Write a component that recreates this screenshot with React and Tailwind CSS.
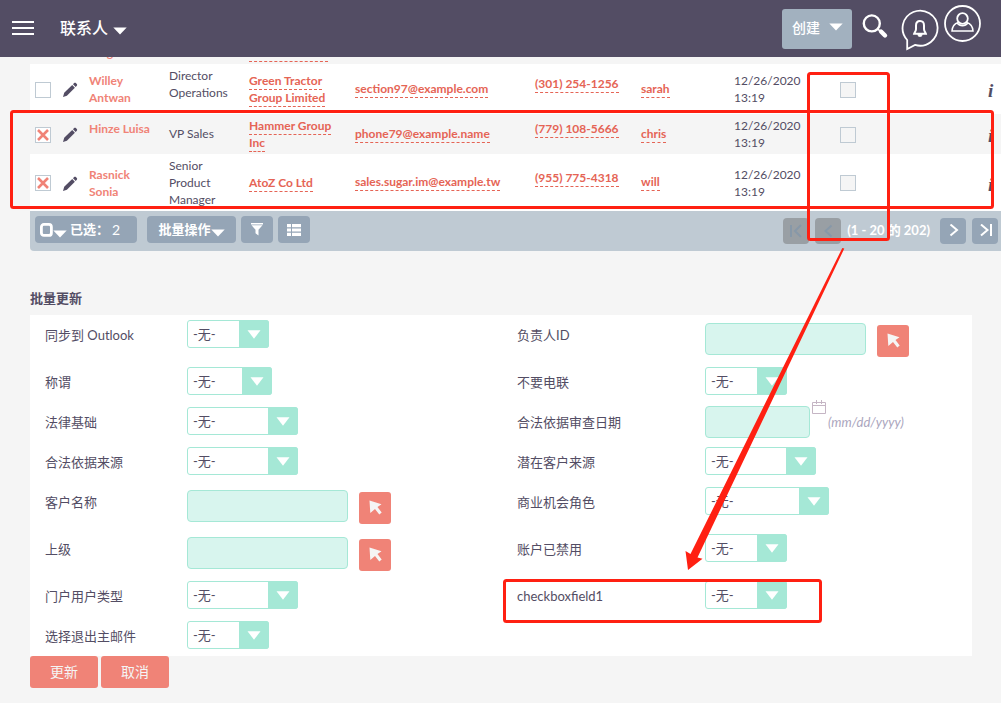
import React from "react";

const FONT = "font-['Lato','Noto_Sans_CJK_SC',sans-serif]";

const contacts = [
  {
    id: "c1",
    name: "Willey Antwan",
    title: "Director Operations",
    titlePad: "pb-[10px]",
    account: "Green Tractor Group Limited",
    email: "section97@example.com",
    phone: "(301) 254-1256",
    user: "sarah",
    date: "12/26/2020",
    time: "13:19",
    checked: false,
    row: "h-[50px] bg-white",
  },
  {
    id: "c2",
    name: "Hinze Luisa",
    namePad: "pb-[11px]",
    title: "VP Sales",
    titlePad: "pb-[2px]",
    account: "Hammer Group Inc",
    email: "phone79@example.name",
    phone: "(779) 108-5666",
    user: "chris",
    date: "12/26/2020",
    time: "13:19",
    checked: true,
    row: "h-[40px] bg-[#f5f5f5]",
  },
  {
    id: "c3",
    name: "Rasnick Sonia",
    title: "Senior Product Manager",
    account: "AtoZ Co Ltd",
    email: "sales.sugar.im@example.tw",
    phone: "(955) 775-4318",
    user: "will",
    date: "12/26/2020",
    time: "13:19",
    checked: true,
    row: "h-[57px] bg-white",
  },
];

const fields = [
  { h: "h-[47px]", left: ["同步到 Outlook", "select", "w-[82px]"], right: ["负责人ID", "relate"] },
  { h: "h-[40px]", left: ["称谓", "select", "w-[85px]"], right: ["不要电联", "select", "w-[82px]"] },
  { h: "h-[40px]", left: ["法律基础", "select", "w-[111px]"], right: ["合法依据审查日期", "date"] },
  { h: "h-[40px]", left: ["合法依据来源", "select", "w-[111px]"], right: ["潜在客户来源", "select", "w-[111px]"] },
  { h: "h-[47px]", left: ["客户名称", "relate"], right: ["商业机会角色", "select", "w-[124px]"] },
  { h: "h-[47px]", left: ["上级", "relate"], right: ["账户已禁用", "select", "w-[82px]"] },
  { h: "h-[40px]", left: ["门户用户类型", "select", "w-[111px]"], right: ["checkboxfield1", "select", "w-[82px]"] },
  { h: "h-[40px]", left: ["选择退出主邮件", "select", "w-[82px]"], right: null },
];

function Caret({ className = "" }) {
  return (
    <svg className={className} width="14" height="8" viewBox="0 0 14 8" fill="currentColor" aria-hidden="true">
      <path d="M0.3 0.5h13.4L7 7.5z" />
    </svg>
  );
}

function Pencil() {
  return (
    <svg width="16" height="16" viewBox="0 0 16 16" fill="#534d64" aria-hidden="true" className="block">
      <path d="M1 15l1.2-4.2L10.2 3l2.700 2.700-8 8z" />
      <path d="M11 2.200l1.100-1.100c.6-.5 1.300-.5 1.800 0l.9.9c.5.5.5 1.200 0 1.700L13.700 4.900z" />
    </svg>
  );
}

function NameLink({ children }) {
  return (
    <a href="#contact" className="font-bold text-[#f08377]">
      {children}
    </a>
  );
}

function DashLink({ children }) {
  return (
    <a href="#record" className="border-b border-dashed border-[#e56455] pb-px font-bold text-[#e56455]">
      {children}
    </a>
  );
}

function Tick({ label, checked, bg }) {
  return (
    <span className="relative block size-4">
      <input
        type="checkbox"
        aria-label={label}
        defaultChecked={checked}
        className={`peer block size-4 appearance-none border border-[#bfcad3] ${bg}`}
      />
      <svg
        className="pointer-events-none absolute inset-0 hidden peer-checked:block"
        width="16"
        height="16"
        viewBox="0 0 16 16"
        stroke="#f08377"
        strokeWidth="2.600"
        aria-hidden="true"
      >
        <path d="M3 3l10 10M13 3L3 13" />
      </svg>
    </span>
  );
}

function ContactTable() {
  return (
    <table className="w-full table-fixed border-collapse text-[12px] leading-[17px] text-[#534d64]">
      <colgroup>
        <col className="w-[27px]" />
        <col className="w-[27px]" />
        <col className="w-[80px]" />
        <col className="w-[80px]" />
        <col className="w-[106px]" />
        <col className="w-[180px]" />
        <col className="w-[106px]" />
        <col className="w-[93px]" />
        <col className="w-[106px]" />
        <col />
        <col className="w-[18px]" />
      </colgroup>
      <tbody>
        <tr className="h-[20px]">
          <td colSpan={2} />
          <td className="px-[5px] pb-[3px]">
            <NameLink>Jang</NameLink>
          </td>
          <td />
          <td className="px-[5px] pb-[3px]">
            <DashLink>Investment Inc</DashLink>
          </td>
          <td colSpan={6} />
        </tr>
        {contacts.map((c) => (
          <tr key={c.id} className={c.row}>
            <td className="px-[5px] pt-px">
              <Tick label={c.name} checked={c.checked} bg="bg-white" />
            </td>
            <td className="px-[5px] pt-[2px]">
              <a href="#edit" aria-label={"Edit " + c.name}>
                <Pencil />
              </a>
            </td>
            <td className={`px-[5px] ${c.namePad || ""}`}>
              <NameLink>{c.name}</NameLink>
            </td>
            <td className={`px-[5px] ${c.titlePad || ""}`}>{c.title}</td>
            <td className="px-[5px]">
              <DashLink>{c.account}</DashLink>
            </td>
            <td className="px-[5px] pb-[2px]">
              <DashLink>{c.email}</DashLink>
            </td>
            <td className="px-[5px] pb-[11px]">
              <DashLink>{c.phone}</DashLink>
            </td>
            <td className="px-[5px] pb-[2px]">
              <DashLink>{c.user}</DashLink>
            </td>
            <td className="px-[5px]">
              {c.date}
              <br />
              {c.time}
            </td>
            <td className="px-[5px] pt-px">
              <Tick label={"checkboxfield1 " + c.name} bg="bg-[#f5f5f5]" />
            </td>
            <td className="pt-[5px] pl-[5px]">
              <span className="font-['Liberation_Serif',serif] text-[19px] font-bold italic">i</span>
            </td>
          </tr>
        ))}
      </tbody>
    </table>
  );
}

const toolBtn = "flex h-[27px] items-center justify-center rounded-[4px] bg-[#95a5b6] text-white";

function PageButton({ label, disabled, d }) {
  return (
    <button
      type="button"
      aria-label={label}
      disabled={disabled}
      className="flex size-[26px] items-center justify-center rounded-[4px] bg-[#95a5b6] text-white disabled:bg-[#999fa4] disabled:text-[#8798a8]"
    >
      <svg width="14" height="14" viewBox="0 0 14 14" fill="none" stroke="currentColor" strokeWidth="2" aria-hidden="true">
        <path d={d} />
      </svg>
    </button>
  );
}

function Toolbar() {
  return (
    <div className="flex h-[40px] items-start justify-between rounded-bl-[4px] bg-[#bfcad3] pt-[5px] pr-[3px] pl-[5px]">
      <div className="flex">
        <button type="button" className={`${toolBtn} mr-[10px] w-[102px] justify-start pl-[5px] text-[14px]`}>
          <svg width="13" height="14" viewBox="0 0 13 14" fill="none" stroke="currentColor" strokeWidth="2.800" aria-hidden="true">
            <rect x="1.400" y="1.400" width="10" height="11" rx="2.500" />
          </svg>
          <Caret className="mt-[8px] mr-[3px]" />
          <b className="mr-[3px] text-[13px]">已选：</b>
          <span>2</span>
        </button>
        <button type="button" className={`${toolBtn} mr-[5px] w-[89px] text-[13px] font-bold`}>
          批量操作
          <Caret className="mt-[6px]" />
        </button>
        <button type="button" aria-label="筛选" className={`${toolBtn} mr-[5px] w-[32px]`}>
          <svg width="14" height="14" viewBox="0 0 14 14" fill="currentColor" aria-hidden="true">
            <path d="M1 0h12v1.500H1zM1.500 2.200h11L8.500 6.800v5.700l-3-2.200V6.800z" />
          </svg>
        </button>
        <button type="button" aria-label="选择列" className={`${toolBtn} w-[32px]`}>
          <svg width="14" height="12" viewBox="0 0 14 12" fill="currentColor" aria-hidden="true">
            <path d="M0 0h4v3.200H0zM5 0h9v3.200H5zM0 4.400h4v3.200H0zM5 4.400h9v3.200H5zM0 8.800h4V12H0zM5 8.800h9V12H5z" />
          </svg>
        </button>
      </div>
      <div className="flex items-center gap-[6px] pt-[2px]">
        <PageButton label="首页" disabled d="M2 1v12M12 1L6 7l6 6" />
        <PageButton label="上一页" disabled d="M10.500 1.500L4.500 7l6 5.500" />
        <span className="mr-[4px] text-[13px] font-bold whitespace-nowrap text-white">(1 - 20 的 202)</span>
        <PageButton label="下一页" d="M4.500 0.500L11 6L4.500 11.500" />
        <PageButton label="末页" d="M3 0.500L9.500 6l-6.500 5.500M13 0v12" />
      </div>
    </div>
  );
}

function FieldSelect({ id, width }) {
  return (
    <div className={`relative mt-[5px] h-[28px] ${width}`}>
      <select
        id={id}
        className="h-full w-full appearance-none rounded-[3px] border border-[#a5e8d6] bg-white pt-[2px] pl-[5px] text-[13px] text-[#534d64]"
      >
        <option>-无-</option>
      </select>
      <span className="pointer-events-none absolute inset-y-0 right-0 flex w-[30px] items-center justify-center rounded-r-[3px] bg-[#a5e8d6] text-white">
        <svg width="14" height="9" viewBox="0 0 14 9" fill="currentColor" aria-hidden="true">
          <path d="M0.500 0.300h13L7 8.700z" />
        </svg>
      </span>
    </div>
  );
}

const inputCls = "h-[32px] rounded-[4px] border border-[#a5e8d6] bg-[#d8f5ee] px-2 text-[13px] text-[#534d64]";

function Control({ id, kind, width }) {
  if (kind === "select") return <FieldSelect id={id} width={width} />;
  if (kind === "relate")
    return (
      <div className="flex items-start gap-[11px] pt-[8px]">
        <input id={id} type="text" className={`${inputCls} w-[161px]`} />
        <button
          type="button"
          aria-label="选择"
          className="mt-[2px] flex size-[32px] items-center justify-center rounded-[3px] bg-[#f08377]"
        >
          <svg width="14" height="16" viewBox="0 0 14 16" fill="#f5f5f5" aria-hidden="true">
            <path d="M1.500 0.500L13.500 4.300L9.500 7L13.700 12.600L11.300 14.400L7 9L2.300 13z" />
          </svg>
        </button>
      </div>
    );
  return (
    <div className="flex items-start pt-[4px]">
      <input id={id} type="text" className={`${inputCls} w-[105px]`} />
      <button type="button" aria-label="日历" className="-mt-[6px] ml-[2px]">
        <svg width="14" height="14" viewBox="0 0 14 14" fill="none" stroke="#c5b5c4" aria-hidden="true">
          <path d="M0.500 2.500h13v11h-13zM0.500 5.500h13M4.500 0v4M9.500 0v4" />
        </svg>
      </button>
      <span className="ml-[2px] pt-[6px] text-[13px] leading-[20px] whitespace-nowrap text-[#aaa5bd] italic">
        (mm/dd/yyyy)
      </span>
    </div>
  );
}

function Field({ id, field }) {
  if (!field) return null;
  const [label, kind, width] = field;
  return (
    <>
      <label htmlFor={id} className="pt-[10px] pl-[15px] text-[13px] leading-[20px] whitespace-nowrap">
        {label}
      </label>
      <div>
        <Control id={id} kind={kind} width={width} />
      </div>
    </>
  );
}

function MassUpdate() {
  const action = "h-[32px] w-[68px] rounded-[3px] bg-[#f08377] pb-[2px] text-[14px] text-[#f5f5f5]";
  return (
    <form className="mt-[37px] mr-[29px] text-[#534d64]" onSubmit={(e) => e.preventDefault()}>
      <h2 className="h-[27px] text-[13px] leading-[20px] font-bold">批量更新</h2>
      <div className="bg-white">
        {fields.map((f, i) => (
          <div key={i} className={`grid grid-cols-[157fr_315fr_203fr_267fr] ${f.h}`}>
            <Field id={"l" + i} field={f.left} />
            <Field id={"r" + i} field={f.right} />
          </div>
        ))}
      </div>
      <div className="flex gap-[3px]">
        <button type="submit" className={action}>
          更新
        </button>
        <button type="button" className={action}>
          取消
        </button>
      </div>
    </form>
  );
}

function Header() {
  return (
    <header className="relative z-10 flex h-[57px] items-start justify-between bg-[#534d64] pr-[19px] pl-[12px] text-white">
      <div className="flex h-[55px] items-center">
        <button type="button" aria-label="菜单" className="mr-[26px]">
          <svg width="22" height="16" viewBox="0 0 22 16" fill="currentColor" aria-hidden="true">
            <path d="M0 1h22v2H0zM0 7h22v2H0zM0 13h22v2H0z" />
          </svg>
        </button>
        <button type="button" className="flex items-center gap-[5px] text-[16px] font-medium">
          联系人
          <Caret className="mt-[6px]" />
        </button>
      </div>
      <div className="flex items-start">
        <button
          type="button"
          className="mt-[9px] mr-[10px] flex h-[40px] w-[70px] items-center justify-between rounded-[3px] bg-[#a2b1bf] pr-[9px] pb-[4px] pl-[10px] text-[14px] font-medium"
        >
          创建
          <Caret />
        </button>
        <button type="button" aria-label="搜索" className="mt-[13px] mr-[12px]">
          <svg width="27" height="27" viewBox="0 0 27 27" fill="none" stroke="currentColor" aria-hidden="true">
            <circle cx="9.800" cy="10.400" r="8" strokeWidth="2.400" />
            <path d="M19 18.500l4 4" strokeWidth="4.400" strokeLinecap="round" />
            <path d="M15.500 15.800l3 2.500" strokeWidth="1.600" />
          </svg>
        </button>
        <button type="button" aria-label="通知" className="mt-[9px] mr-[5px]">
          <svg width="38" height="42" viewBox="0 0 38 42" fill="none" stroke="currentColor" strokeWidth="1.800" aria-hidden="true">
            <path d="M6.200 31A17.500 17.500 0 1 1 14 35.900L6.200 40z" />
            <path
              d="M19 12c-2.800 0-4 1.800-4 4.500v3.500c0 2.300-1.500 3-1.900 4.700h11.800c-.4-1.700-1.900-2.400-1.900-4.700v-3.500c0-2.700-1.200-4.500-4-4.500z"
              strokeWidth="2"
            />
            <path d="M16.800 25h4.400v.5a2.200 2.200 0 0 1-4.400 0z" fill="currentColor" strokeWidth="0.600" />
          </svg>
        </button>
        <button type="button" aria-label="用户" className="mt-[4px]">
          <svg width="38" height="38" viewBox="0 0 38 38" fill="none" stroke="currentColor" strokeWidth="1.800" aria-hidden="true">
            <circle cx="18.500" cy="19.500" r="17.500" />
            <circle cx="18.500" cy="14.500" r="5.300" />
            <path d="M14.300 18.500c-4 1.200-6 3.500-6.300 8.500h21c-.3-5-2.300-7.300-6.300-8.500M13 18.800c3 4 8 4 11 0" strokeWidth="1.500" />
          </svg>
        </button>
      </div>
    </header>
  );
}

function Annotations() {
  return (
    <svg
      className="pointer-events-none absolute top-0 left-0 z-20"
      width="1001"
      height="703"
      viewBox="0 0 1001 703"
      fill="none"
      stroke="#ff2012"
      strokeWidth="3"
      aria-hidden="true"
    >
      <rect x="11.500" y="111.500" width="981" height="96" rx="2" />
      <rect x="808.500" y="73.500" width="80" height="166" rx="2" />
      <rect x="504.500" y="580.500" width="316" height="41" rx="2" />
      <path d="M842.300 248L844.300 248.500L697.500 557.500L702.500 558.700L688 570L685.500 551L690.500 554z" fill="#ff2012" stroke="none" />
    </svg>
  );
}

export default function App() {
  return (
    <div className={`relative min-h-screen overflow-hidden bg-[#f5f5f5] ${FONT}`}>
      <Header />
      <main className="-mt-[13px] pl-[30px]">
        <ContactTable />
        <Toolbar />
        <MassUpdate />
      </main>
      <Annotations />
    </div>
  );
}
